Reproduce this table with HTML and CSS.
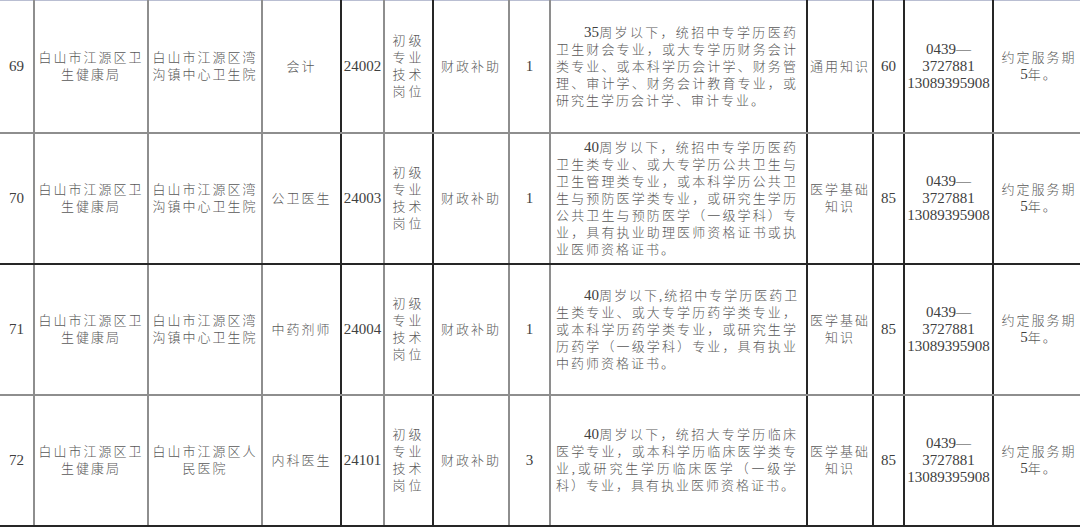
FILE: index.html
```html
<!DOCTYPE html>
<html lang="zh-CN">
<head>
<meta charset="utf-8">
<title>招聘岗位表</title>
<link rel="stylesheet" href="styles.css">
</head>
<body>
<table class="jobs">
  <colgroup>
    <col class="w-no"><col class="w-org"><col class="w-unit"><col class="w-post"><col class="w-code">
    <col class="w-type"><col class="w-fund"><col class="w-num"><col class="w-req"><col class="w-exam">
    <col class="w-ratio"><col class="w-tel"><col class="w-note">
  </colgroup>
  <tbody>
    <tr class="r-gray r-first">
      <td class="c1 num">69</td>
      <td class="c2">白山市江源区卫<br>生健康局</td>
      <td class="c3">白山市江源区湾<br>沟镇中心卫生院</td>
      <td class="c4">会计</td>
      <td class="c5 num">24002</td>
      <td class="c6">初级<br>专业<br>技术<br>岗位</td>
      <td class="c7">财政补助</td>
      <td class="c8 num">1</td>
      <td class="c9 req">
        <span class="ln first"><span class="d">35</span>周岁以下，统招中专学历医药</span>
        <span class="ln">卫生财会专业，或大专学历财务会计</span>
        <span class="ln">类专业、或本科学历会计学、财务管</span>
        <span class="ln">理、审计学、财务会计教育专业，或</span>
        <span class="ln end">研究生学历会计学、审计专业。</span>
      </td>
      <td class="c10">通用知识</td>
      <td class="c11 num">60</td>
      <td class="c12 num">0439—<br>3727881<br>13089395908</td>
      <td class="c13">约定服务期<br><span class="d">5</span>年。</td>
    </tr>
    <tr class="r-dark">
      <td class="c1 num">70</td>
      <td class="c2">白山市江源区卫<br>生健康局</td>
      <td class="c3">白山市江源区湾<br>沟镇中心卫生院</td>
      <td class="c4">公卫医生</td>
      <td class="c5 num">24003</td>
      <td class="c6">初级<br>专业<br>技术<br>岗位</td>
      <td class="c7">财政补助</td>
      <td class="c8 num">1</td>
      <td class="c9 req">
        <span class="ln first"><span class="d">40</span>周岁以下，统招中专学历医药</span>
        <span class="ln">卫生类专业、或大专学历公共卫生与</span>
        <span class="ln">卫生管理类专业，或本科学历公共卫</span>
        <span class="ln">生与预防医学类专业，或研究生学历</span>
        <span class="ln">公共卫生与预防医学（一级学科）专</span>
        <span class="ln">业，具有执业助理医师资格证书或执</span>
        <span class="ln end">业医师资格证书。</span>
      </td>
      <td class="c10">医学基础<br>知识</td>
      <td class="c11 num">85</td>
      <td class="c12 num">0439—<br>3727881<br>13089395908</td>
      <td class="c13">约定服务期<br><span class="d">5</span>年。</td>
    </tr>
    <tr class="r-gray">
      <td class="c1 num">71</td>
      <td class="c2">白山市江源区卫<br>生健康局</td>
      <td class="c3">白山市江源区湾<br>沟镇中心卫生院</td>
      <td class="c4">中药剂师</td>
      <td class="c5 num">24004</td>
      <td class="c6">初级<br>专业<br>技术<br>岗位</td>
      <td class="c7">财政补助</td>
      <td class="c8 num">1</td>
      <td class="c9 req">
        <span class="ln first"><span class="d">40</span>周岁以下,统招中专学历医药卫</span>
        <span class="ln">生类专业、或大专学历药学类专业，</span>
        <span class="ln">或本科学历药学类专业，或研究生学</span>
        <span class="ln">历药学（一级学科）专业，具有执业</span>
        <span class="ln end">中药师资格证书。</span>
      </td>
      <td class="c10">医学基础<br>知识</td>
      <td class="c11 num">85</td>
      <td class="c12 num">0439—<br>3727881<br>13089395908</td>
      <td class="c13">约定服务期<br><span class="d">5</span>年。</td>
    </tr>
    <tr class="r-dark">
      <td class="c1 num">72</td>
      <td class="c2">白山市江源区卫<br>生健康局</td>
      <td class="c3">白山市江源区人<br>民医院</td>
      <td class="c4">内科医生</td>
      <td class="c5 num">24101</td>
      <td class="c6">初级<br>专业<br>技术<br>岗位</td>
      <td class="c7">财政补助</td>
      <td class="c8 num">3</td>
      <td class="c9 req">
        <span class="ln first"><span class="d">40</span>周岁以下，统招大专学历临床</span>
        <span class="ln">医学专业，或本科学历临床医学类专</span>
        <span class="ln">业,或研究生学历临床医学（一级学</span>
        <span class="ln end">科）专业，具有执业医师资格证书。</span>
      </td>
      <td class="c10">医学基础<br>知识</td>
      <td class="c11 num">85</td>
      <td class="c12 num">0439—<br>3727881<br>13089395908</td>
      <td class="c13">约定服务期<br><span class="d">5</span>年。</td>
    </tr>
  </tbody>
</table>
</body>
</html>
```

FILE: styles.css
```css
html, body {
  margin: 0;
  padding: 0;
  background: #ffffff;
  overflow: hidden;
}

body {
  width: 1080px;
  height: 527px;
}

.jobs {
  border-collapse: collapse;
  table-layout: fixed;
  width: 1085px;
  font-family: "Liberation Serif", "Noto Sans CJK SC", serif;
  font-size: 13px;
  font-weight: 300;
  letter-spacing: 2px;
  line-height: 17px;
  color: #585858;
}

.w-no { width: 34px; }
.w-org { width: 114px; }
.w-unit { width: 114px; }
.w-post { width: 79px; }
.w-code { width: 43px; }
.w-type { width: 49px; }
.w-fund { width: 76px; }
.w-num { width: 41px; }
.w-req { width: 257px; }
.w-exam { width: 66px; }
.w-ratio { width: 31px; }
.w-tel { width: 89px; }
.w-note { width: 92px; }

.jobs td {
  padding: 0 2px;
  text-align: center;
  vertical-align: middle;
  overflow: hidden;
  white-space: nowrap;
  border-right: 2px solid #8e8e8e;
}

.jobs tr { height: 131px; }
.jobs tr.r-first { height: 132px; }
.jobs tr.r-first td { border-top: 1px solid #b9bed2; }

.r-gray td { border-bottom: 2px solid #8e8e8e; }
.r-dark td { border-bottom: 2px solid #262626; }

.jobs td.c4,
.jobs td.c6,
.jobs td.c9,
.jobs td.c10,
.jobs td.c11,
.jobs td.c12,
.jobs td.c13 { border-right-color: #262626; }

.jobs td.num,
.d {
  font-family: "Liberation Serif", serif;
  font-size: 15px;
  font-weight: 400;
  letter-spacing: 0;
  color: #404040;
}

.jobs td.c5 { padding: 0; }
.jobs td.c12 { padding: 0; line-height: 17px; }

.jobs td.c6 { letter-spacing: 3px; }

.jobs td.req {
  text-align: left;
  padding: 0 8px 0 5px;
}

.ln {
  display: block;
  text-align: justify;
  text-align-last: justify;
}

.ln.first { padding-left: 28px; }
.ln.end { text-align-last: left; }
```
